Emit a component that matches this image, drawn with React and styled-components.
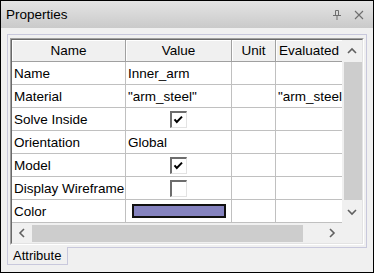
import React from "react";
import styled, { createGlobalStyle } from "styled-components";

const GlobalStyle = createGlobalStyle`
  html, body {
    margin: 0;
    padding: 0;
    background: #ffffff;
  }
  body {
    font-family: "Liberation Sans", Arial, sans-serif;
    color: #000;
  }
`;

const rows = [
  { name: "Name", value: "Inner_arm" },
  { name: "Material", value: '"arm_steel"', evaluated: '"arm_steel"' },
  { name: "Solve Inside", check: true },
  { name: "Orientation", value: "Global" },
  { name: "Model", check: true },
  { name: "Display Wireframe", check: false },
  { name: "Color", color: "#8583bf" },
];

const columns = [
  { title: "Name", width: 114 },
  { title: "Value", width: 106 },
  { title: "Unit", width: 44 },
  { title: "Evaluated", width: 100, align: "left" },
];

const Chevron = ({ dir }) => {
  const pts = {
    up: "1,6 5,2 9,6",
    down: "1,2 5,6 9,2",
    left: "6,1 2,5 6,9",
    right: "2,1 6,5 2,9",
  }[dir];
  const vertical = dir === "up" || dir === "down";
  return (
    <svg width={vertical ? 10 : 8} height={vertical ? 8 : 10} viewBox={vertical ? "0 0 10 8" : "0 0 8 10"}>
      <polyline points={pts} fill="none" stroke="#606060" strokeWidth="1.6" />
    </svg>
  );
};

const PinIcon = () => (
  <svg width="10" height="11" viewBox="0 0 10 11">
    <path d="M3.5 1.5 H6.5 V6.5 M3.5 1.5 V6.5 M1 6.5 H9 M5 6.5 V11" fill="none" stroke="#6e6e6e" strokeWidth="1" />
  </svg>
);

const CloseIcon = () => (
  <svg width="10" height="10" viewBox="0 0 10 10">
    <path d="M1 1 L9 9 M9 1 L1 9" fill="none" stroke="#6e6e6e" strokeWidth="1.1" />
  </svg>
);

const App = () => {
  return (
    <>
      <GlobalStyle />
      <Window>
        <TitleBar>
          <span>Properties</span>
          <TitleTools>
            <PinIcon />
            <CloseIcon />
          </TitleTools>
        </TitleBar>
        <Body>
          <TabPage>
            <GridFrame>
              <GridInner>
                <Viewport>
                  <Table>
                    {columns.map((c) => (
                      <HeaderCell key={c.title} $align={c.align}>
                        {c.title}
                      </HeaderCell>
                    ))}
                    {rows.map((r) => (
                      <React.Fragment key={r.name}>
                        <Cell>{r.name}</Cell>
                        <Cell $center={r.check !== undefined}>
                          {r.check !== undefined && (
                            <CheckBox>
                              {r.check && (
                                <svg width="14" height="14" viewBox="0 0 14 14">
                                  <polyline points="2.5,6.3 4.8,9 10,3.6" fill="none" stroke="#000" strokeWidth="2" />
                                </svg>
                              )}
                            </CheckBox>
                          )}
                          {r.color && <Swatch $color={r.color} />}
                          {r.value}
                        </Cell>
                        <Cell />
                        <Cell>{r.evaluated}</Cell>
                      </React.Fragment>
                    ))}
                  </Table>
                </Viewport>
                <VScroll>
                  <ArrowButton $size={22}>
                    <Chevron dir="up" />
                  </ArrowButton>
                  <VThumb />
                  <ArrowButton $grow>
                    <Chevron dir="down" />
                  </ArrowButton>
                </VScroll>
                <HScroll>
                  <ArrowButton $size={20}>
                    <Chevron dir="left" />
                  </ArrowButton>
                  <HThumb />
                  <Track />
                  <ArrowButton $size={20}>
                    <Chevron dir="right" />
                  </ArrowButton>
                </HScroll>
                <Corner />
              </GridInner>
            </GridFrame>
          </TabPage>
          <TabStrip>
            <Tab>Attribute</Tab>
          </TabStrip>
        </Body>
      </Window>
    </>
  );
};

const Window = styled.div`
  width: 374px;
  height: 273px;
  box-sizing: border-box;
  border: 1px solid #000;
  display: flex;
  flex-direction: column;
  background: #f0f0f0;
`;

const TitleBar = styled.div`
  height: 27px;
  flex: none;
  display: flex;
  align-items: center;
  justify-content: space-between;
  padding: 0 9px 0 5px;
  background: linear-gradient(#e4e4e4, #cacaca);
  font-size: 13.5px;
`;

const TitleTools = styled.div`
  display: flex;
  align-items: center;
  gap: 12px;
`;

const Body = styled.div`
  flex: 1;
  display: flex;
  flex-direction: column;
  padding: 6px 6px 0 6px;
`;

const TabPage = styled.div`
  height: 214px;
  box-sizing: border-box;
  border: 1px solid #c8c8dc;
  padding: 3px 2px 2px 2px;
  display: flex;
`;

const GridFrame = styled.div`
  flex: 1;
  display: flex;
  border: 1px solid;
  border-color: #a0a0a0 #ffffff #ffffff #a0a0a0;
`;

const GridInner = styled.div`
  flex: 1;
  min-width: 0;
  display: grid;
  grid-template-columns: 1fr 20px;
  grid-template-rows: 1fr 20px;
  border: 1px solid;
  border-color: #696969 #e3e3e3 #e3e3e3 #696969;
  background: #f0f0f0;
`;

const Viewport = styled.div`
  overflow: hidden;
  background: #ffffff;
  min-width: 0;
`;

const Table = styled.div`
  display: grid;
  grid-template-columns: ${columns.map((c) => c.width + "px").join(" ")};
  width: max-content;
  font-size: 13.5px;
`;

const HeaderCell = styled.div`
  height: 22px;
  box-sizing: border-box;
  background: #f0f0f0;
  border-right: 1px solid #a0a0a0;
  border-bottom: 1px solid #a0a0a0;
  box-shadow: inset 1px 1px 0 #ffffff;
  display: flex;
  align-items: center;
  justify-content: ${(p) => (p.$align === "left" ? "flex-start" : "center")};
  padding-left: ${(p) => (p.$align === "left" ? "3px" : "0")};
  white-space: nowrap;
`;

const Cell = styled.div`
  height: 23px;
  box-sizing: border-box;
  border-right: 1px solid #c0c0c0;
  border-bottom: 1px solid #c0c0c0;
  display: flex;
  align-items: center;
  justify-content: ${(p) => (p.$center ? "center" : "flex-start")};
  padding: 0 2px;
  white-space: nowrap;
  overflow: hidden;
`;

const CheckBox = styled.span`
  width: 17px;
  height: 17px;
  box-sizing: border-box;
  border-style: solid;
  border-width: 2px 1px 1px 2px;
  border-color: #6d6d6d #e3e3e3 #e3e3e3 #6d6d6d;
  background: #ffffff;
  display: flex;
`;

const Swatch = styled.span`
  margin-left: 4px;
  width: 94px;
  height: 14px;
  box-sizing: border-box;
  border: 2px solid #111;
  background: ${(p) => p.$color};
`;

const VScroll = styled.div`
  display: flex;
  flex-direction: column;
  background: #f0f0f0;
`;

const HScroll = styled.div`
  display: flex;
  background: #f0f0f0;
`;

const ArrowButton = styled.div`
  flex: ${(p) => (p.$grow ? "1" : `0 0 ${p.$size}px`)};
  display: flex;
  align-items: center;
  justify-content: center;
`;

const VThumb = styled.div`
  height: 138px;
  margin: 0 0 0 2px;
  background: #cdcdcd;
`;

const HThumb = styled.div`
  width: 271px;
  margin: 2px 0 1px 0;
  background: #cdcdcd;
`;

const Track = styled.div`
  flex: 1;
`;

const Corner = styled.div`
  background: #f0f0f0;
`;

const TabStrip = styled.div`
  display: flex;
`;

const Tab = styled.div`
  margin-top: -1px;
  height: 18px;
  box-sizing: border-box;
  border: 1px solid #c8c8dc;
  border-top: none;
  background: #f0f0f0;
  padding: 0 6px 0 5px;
  display: flex;
  align-items: center;
  font-size: 13px;
`;

export default App;
